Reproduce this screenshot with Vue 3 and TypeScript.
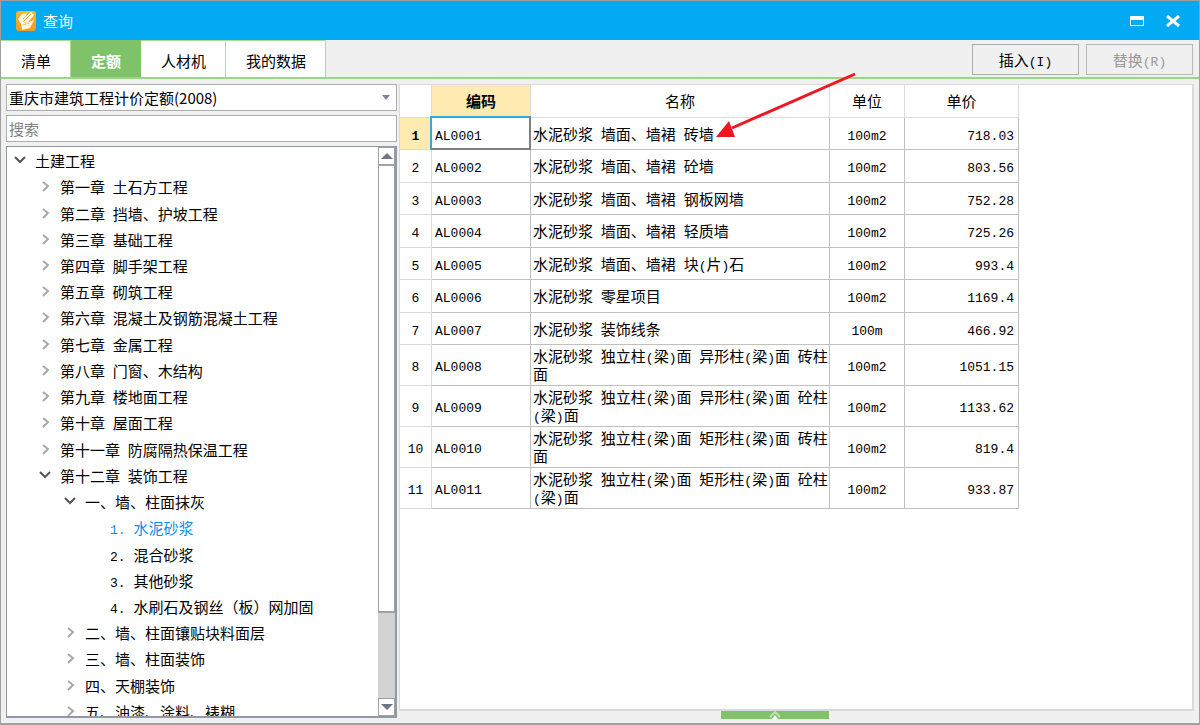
<script setup lang="ts">
import { ref, h, type FunctionalComponent } from 'vue'

interface TreeNode {
  level: number
  label: string
  state: 'open' | 'closed' | 'leaf'
}

interface Item {
  code: string
  name: string
  unit: string
  price: string
}

/* Sets half-width characters in the monospaced face beside full-width text. */
const MixedText: FunctionalComponent<{ text: string }> = (props) =>
  (props.text.match(/[\x20-\x7e]+|[^\x20-\x7e]+/g) ?? []).map((run) =>
    /^[\x20-\x7e]/.test(run) ? h('span', { class: 'half' }, run) : run
  )
MixedText.props = ['text']

const tabs: string[] = ['清单', '定额', '人材机', '我的数据']
const activeTab = ref('定额')
const library = ref('重庆市建筑工程计价定额(2008)')
const keyword = ref('')
const selectedNode = ref('1. 水泥砂浆')
const selectedRow = ref(0)

const chapters: string[] = [
  '第一章 土石方工程',
  '第二章 挡墙、护坡工程',
  '第三章 基础工程',
  '第四章 脚手架工程',
  '第五章 砌筑工程',
  '第六章 混凝土及钢筋混凝土工程',
  '第七章 金属工程',
  '第八章 门窗、木结构',
  '第九章 楼地面工程',
  '第十章 屋面工程',
  '第十一章 防腐隔热保温工程'
]

const nodes: TreeNode[] = [
  { level: 1, label: '土建工程', state: 'open' },
  ...chapters.map((label): TreeNode => ({ level: 2, label, state: 'closed' })),
  { level: 2, label: '第十二章 装饰工程', state: 'open' },
  { level: 3, label: '一、墙、柱面抹灰', state: 'open' },
  { level: 4, label: '1. 水泥砂浆', state: 'leaf' },
  { level: 4, label: '2. 混合砂浆', state: 'leaf' },
  { level: 4, label: '3. 其他砂浆', state: 'leaf' },
  { level: 4, label: '4. 水刷石及钢丝（板）网加固', state: 'leaf' },
  { level: 3, label: '二、墙、柱面镶贴块料面层', state: 'closed' },
  { level: 3, label: '三、墙、柱面装饰', state: 'closed' },
  { level: 3, label: '四、天棚装饰', state: 'closed' },
  { level: 3, label: '五、油漆、涂料、裱糊', state: 'closed' }
]

const items: Item[] = [
  { code: 'AL0001', name: '水泥砂浆 墙面、墙裙 砖墙', unit: '100m2', price: '718.03' },
  { code: 'AL0002', name: '水泥砂浆 墙面、墙裙 砼墙', unit: '100m2', price: '803.56' },
  { code: 'AL0003', name: '水泥砂浆 墙面、墙裙 钢板网墙', unit: '100m2', price: '752.28' },
  { code: 'AL0004', name: '水泥砂浆 墙面、墙裙 轻质墙', unit: '100m2', price: '725.26' },
  { code: 'AL0005', name: '水泥砂浆 墙面、墙裙 块(片)石', unit: '100m2', price: '993.4' },
  { code: 'AL0006', name: '水泥砂浆 零星项目', unit: '100m2', price: '1169.4' },
  { code: 'AL0007', name: '水泥砂浆 装饰线条', unit: '100m', price: '466.92' },
  { code: 'AL0008', name: '水泥砂浆 独立柱(梁)面 异形柱(梁)面 砖柱面', unit: '100m2', price: '1051.15' },
  { code: 'AL0009', name: '水泥砂浆 独立柱(梁)面 异形柱(梁)面 砼柱(梁)面', unit: '100m2', price: '1133.62' },
  { code: 'AL0010', name: '水泥砂浆 独立柱(梁)面 矩形柱(梁)面 砖柱面', unit: '100m2', price: '819.4' },
  { code: 'AL0011', name: '水泥砂浆 独立柱(梁)面 矩形柱(梁)面 砼柱(梁)面', unit: '100m2', price: '933.87' }
]
</script>

<template>
  <div class="window">
    <header class="titlebar">
      <svg class="logo" width="20" height="20" viewBox="0 0 20 20" aria-hidden="true">
        <defs>
          <linearGradient id="logo-fill" x1="0" y1="0" x2="0" y2="1">
            <stop offset="0" stop-color="#f8b830" />
            <stop offset="1" stop-color="#f59a1c" />
          </linearGradient>
        </defs>
        <rect width="20" height="20" rx="3" fill="url(#logo-fill)" />
        <path d="M2 8L6 3L11 2L10 5L7 7L8 12L13 11L18 9L14 17L6 19L5 13Z" fill="#fff4de" />
        <path d="M6 12L8 7L15 1L18 4L12 11Z" fill="#fff" />
        <path d="M7 11L15 3" fill="none" stroke="#f3a93a" stroke-width="1" />
        <path d="M7 14L13 12" fill="none" stroke="#f8c66c" stroke-width="1" />
      </svg>
      <h1>查询</h1>
      <button class="win-btn" type="button" aria-label="最大化">
        <svg width="14" height="10" viewBox="0 0 14 10"><path d="M0 0H14V10H0Z M1 4V9H13V4Z" fill="#fff" fill-rule="evenodd" /></svg>
      </button>
      <button class="win-btn" type="button" aria-label="关闭">
        <svg width="14" height="12" viewBox="0 0 14 12"><path d="M1 1L13 11M13 1L1 11" stroke="#fff" stroke-width="3" /></svg>
      </button>
    </header>

    <div class="toolbar">
      <nav class="tabs">
        <button
          v-for="tab in tabs"
          :key="tab"
          type="button"
          class="tab"
          :class="{ active: tab === activeTab }"
          @click="activeTab = tab"
        >{{ tab }}</button>
      </nav>
      <div class="actions">
        <button type="button" class="action"><MixedText text="插入(I)" /></button>
        <button type="button" class="action" disabled><MixedText text="替换(R)" /></button>
      </div>
    </div>

    <main class="content">
      <aside class="sidebar">
        <div class="combo">
          <select v-model="library" aria-label="定额库">
            <option>重庆市建筑工程计价定额(2008)</option>
          </select>
          <svg width="8" height="5" viewBox="0 0 8 5" aria-hidden="true"><path d="M0 0H8L4 5Z" fill="#7d8594" /></svg>
        </div>
        <input v-model="keyword" class="search" type="text" placeholder="搜索" aria-label="搜索" />
        <div class="tree-box">
          <div class="tree-view">
            <ul class="tree" role="tree">
              <li
                v-for="node in nodes"
                :key="node.label"
                role="treeitem"
                :aria-level="node.level"
                :class="['node', 'level-' + node.level, { selected: node.label === selectedNode }]"
                @click="selectedNode = node.label"
              >
                <svg v-if="node.state === 'open'" class="twist" width="12" height="12" viewBox="0 0 12 12"><path d="M1 2L6 7L11 2" fill="none" stroke="#555" stroke-width="2" /></svg>
                <svg v-else-if="node.state === 'closed'" class="twist" width="12" height="12" viewBox="0 0 12 12"><path d="M4 1L9 5L4 10" fill="none" stroke="#a8a8a8" stroke-width="2" /></svg>
                <span class="label"><MixedText :text="node.label" /></span>
              </li>
            </ul>
          </div>
          <div class="scrollbar" aria-hidden="true">
            <div class="scroll-end"><svg width="12" height="6" viewBox="0 0 12 6"><path d="M0 6L6 0L12 6Z" fill="#6d7587" /></svg></div>
            <div class="thumb"></div>
            <div class="track"></div>
            <div class="scroll-end"><svg width="12" height="6" viewBox="0 0 12 6"><path d="M0 0H12L6 6Z" fill="#6d7587" /></svg></div>
          </div>
        </div>
      </aside>

      <section class="results">
        <table>
          <colgroup>
            <col class="c-no" /><col class="c-code" /><col class="c-name" /><col class="c-unit" /><col class="c-price" />
          </colgroup>
          <thead>
            <tr><th></th><th class="current">编码</th><th>名称</th><th>单位</th><th>单价</th></tr>
          </thead>
          <tbody>
            <tr v-for="(item, i) in items" :key="item.code" :class="{ picked: i === selectedRow }" @click="selectedRow = i">
              <th scope="row"><span class="half">{{ i + 1 }}</span></th>
              <td class="code"><span class="half">{{ item.code }}</span></td>
              <td class="name"><MixedText :text="item.name" /></td>
              <td class="unit"><span class="half">{{ item.unit }}</span></td>
              <td class="price"><span class="half">{{ item.price }}</span></td>
            </tr>
          </tbody>
        </table>
        <svg class="pointer" width="144" height="70" viewBox="0 0 144 70" aria-hidden="true">
          <path d="M17 57L140 3" stroke="#ee1620" stroke-width="3" />
          <path d="M1 66L14 50L20 66Z" fill="#ee1620" />
        </svg>
      </section>
    </main>

    <footer class="bottom">
      <button type="button" class="expander" aria-label="展开">
        <svg width="12" height="8" viewBox="0 0 12 8"><path d="M1 6L6 1L11 6" fill="none" stroke="#bfe3b0" stroke-width="2" /><path d="M3 8L6 4L9 8Z" fill="#fff" /></svg>
      </button>
    </footer>
  </div>
</template>

<style>
body {
  margin: 0;
}

.half {
  font-family: 'Liberation Mono', monospace;
  font-size: 13px;
  line-height: 1px;
}
</style>

<style scoped>
* {
  box-sizing: border-box;
}

.window {
  display: flex;
  flex-direction: column;
  height: 100vh;
  border: 1px solid #a0a0a0;
  border-bottom-width: 2px;
  background: #f0f0f0;
  color: #000;
  font-family: 'Noto Sans CJK SC', sans-serif;
  font-size: 15px;
  line-height: 18px;
}

button,
select,
input {
  margin: 0;
  border-radius: 0;
  color: inherit;
  font: inherit;
}

.titlebar {
  display: flex;
  flex: none;
  align-items: center;
  height: 39px;
  padding: 0 8px 0 15px;
  background: #02a9f3;
  color: #fff;
}

.titlebar h1 {
  flex: 1;
  margin: 0 0 0 7px;
  font-size: 15px;
  font-weight: 400;
}

.win-btn {
  display: flex;
  align-items: center;
  justify-content: center;
  width: 36px;
  height: 32px;
  padding: 0;
  border: 0;
  background: none;
}

.toolbar {
  display: flex;
  flex: none;
  justify-content: space-between;
  height: 39px;
  border-bottom: 2px solid #9bd587;
}

.tabs {
  display: flex;
}

.tab {
  padding: 3px 19px 0 20px;
  border: 0;
  border-top: 1px solid #a8e08e;
  border-right: 1px solid #a8e08e;
  background: #fff;
}

.tab.active {
  border-color: #80c269;
  background: #80c269;
  color: #fff;
  font-weight: 700;
}

.actions {
  display: flex;
  gap: 7px;
  padding: 4px 6px 2px 0;
}

.action {
  width: 107px;
  padding: 0;
  border: 1px solid #adadad;
  background: #f0f0f0;
}

.action:disabled {
  border-color: #b8b8b8;
  color: #999;
}

.content {
  display: flex;
  flex: 1;
  min-height: 0;
  gap: 2px;
  padding: 5px 5px 0;
}

.sidebar {
  display: flex;
  flex: none;
  flex-direction: column;
  gap: 4px;
  width: 391px;
  margin-bottom: -7px;
}

.combo {
  display: flex;
  align-items: center;
  height: 27px;
  padding-right: 6px;
  border: 1px solid #adadad;
  background: #fff;
}

.combo select {
  flex: 1;
  padding: 0 0 0 2px;
  border: 0;
  outline: 0;
  background: none;
  appearance: none;
}

.search {
  height: 27px;
  padding: 0 2px;
  border: 1px solid #adadad;
  outline: 0;
  background: #fff;
}

.search::placeholder {
  color: #808080;
}

.tree-box {
  display: flex;
  flex: 1;
  min-height: 0;
  border: 1px solid #9299a6;
  border-right-width: 2px;
  border-bottom-width: 2px;
  background: #fff;
}

.tree-view {
  flex: 1;
  overflow: hidden;
}

.tree {
  display: grid;
  grid-auto-rows: 1fr;
  height: 578px;
  margin: 0;
  padding: 1px 0 0;
  list-style: none;
}

.node {
  display: flex;
  align-items: center;
  gap: 9px;
  white-space: nowrap;
}

.level-1 {
  padding-left: 7px;
}

.level-2 {
  padding-left: 32px;
}

.level-3 {
  padding-left: 57px;
}

.level-4 {
  padding-left: 103px;
}

.selected {
  color: #0a90f8;
}

.twist {
  flex: none;
}

.scrollbar {
  display: flex;
  flex: none;
  flex-direction: column;
  width: 17px;
  background: #d3d3d3;
}

.scroll-end {
  display: flex;
  flex: none;
  align-items: center;
  justify-content: center;
  height: 18px;
  border: 1px solid #a0a0a0;
  background: #fff;
}

.thumb {
  flex: 449;
  border: 1px solid #a0a0a0;
  border-bottom-width: 2px;
  background: #fff;
}

.track {
  flex: 86;
}

.results {
  position: relative;
  flex: 1;
  min-width: 0;
  border: 1px solid #dadada;
  border-right-width: 2px;
  border-bottom-width: 2px;
  background: #fff;
}

table {
  width: 619px;
  table-layout: fixed;
  border-spacing: 0;
  line-height: 18px;
}

.c-no {
  width: 32px;
}

.c-code {
  width: 99px;
}

.c-name {
  width: 299px;
}

.c-unit {
  width: 75px;
}

.c-price {
  width: 114px;
}

th,
td {
  height: 33px;
  padding: 0;
  border-right: 1px solid #c0c0c0;
  border-bottom: 1px solid #c0c0c0;
  font-weight: 400;
}

tbody tr:nth-child(odd) > * {
  height: 32px;
}

thead th,
tbody th {
  border-color: #dadada;
}

thead .current {
  background: #ffebb2;
  font-weight: 700;
}

.code {
  padding-left: 3px;
}

.name {
  padding: 2px 0 2px 2px;
}

.unit {
  text-align: center;
}

.price {
  padding-right: 4px;
  text-align: right;
}

.picked th {
  background: #ffebb2;
}

.picked th .half {
  font-weight: 700;
}

.picked .code {
  position: relative;
}

.picked .code::after {
  position: absolute;
  inset: -2px -1px -1px -2px;
  border: 2px solid #808080;
  border-top-color: #37a9d4;
  border-left-color: #37a9d4;
  content: '';
}

.pointer {
  position: absolute;
  top: -14px;
  left: 315px;
}

.bottom {
  display: flex;
  flex: none;
  justify-content: center;
  height: 12px;
  padding-left: 350px;
}

.expander {
  display: flex;
  justify-content: center;
  width: 108px;
  height: 8px;
  padding: 0;
  border: 0;
  background: #80c269;
}
</style>
